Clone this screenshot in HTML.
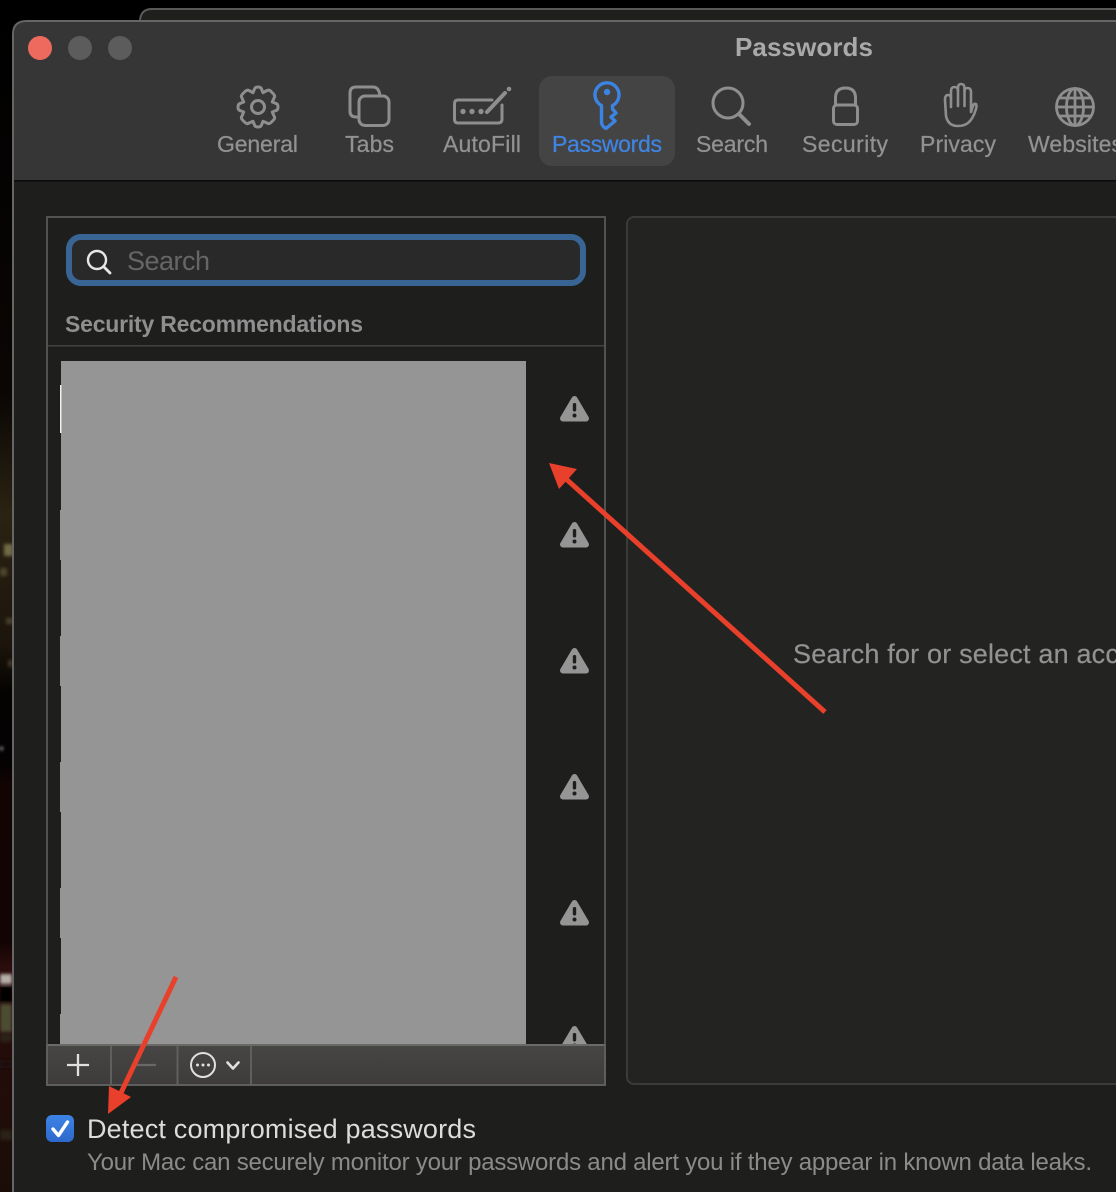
<!DOCTYPE html>
<html><head><meta charset="utf-8"><style>
html,body{margin:0;padding:0;background:#000;width:1116px;height:1192px;overflow:hidden}
svg{display:block;font-family:"Liberation Sans",sans-serif}
</style></head><body>
<svg width="1116" height="1192" viewBox="0 0 1116 1192" xmlns="http://www.w3.org/2000/svg">
<defs>
<linearGradient id="wp" x1="0" y1="0" x2="0" y2="1">
<stop offset="0" stop-color="#000"/><stop offset=".33" stop-color="#0a0604"/><stop offset=".43" stop-color="#2a2212"/><stop offset=".54" stop-color="#1c150c"/><stop offset=".58" stop-color="#050302"/><stop offset=".64" stop-color="#040202"/><stop offset=".66" stop-color="#130404"/><stop offset=".79" stop-color="#120404"/><stop offset=".81" stop-color="#2a0c0c"/><stop offset="1" stop-color="#1a0d08"/>
</linearGradient>
<linearGradient id="tb" x1="0" y1="0" x2="0" y2="1"><stop offset="0" stop-color="#474645"/><stop offset="1" stop-color="#3d3c3b"/></linearGradient>
<linearGradient id="cb" x1="0" y1="0" x2="0" y2="1"><stop offset="0" stop-color="#3d83e6"/><stop offset="1" stop-color="#2d69cc"/></linearGradient>
<filter id="bl" x="-50%" y="-50%" width="200%" height="200%"><feGaussianBlur stdDeviation="1.5"/></filter>
<g id="warn"><path d="M0-11 L11.500 8.500 L-11.500 8.500Z" fill="#959595" stroke="#959595" stroke-width="6" stroke-linejoin="round"/>
<rect x="-1.700" y="-7" width="3.400" height="8.500" rx="1.500" fill="#1e1e1d"/><circle cx="0" cy="5.500" r="2" fill="#1e1e1d"/></g>
</defs>

<!-- wallpaper strip -->
<rect x="0" y="0" width="13" height="1192" fill="url(#wp)"/>
<g filter="url(#bl)">
<rect x="4" y="544" width="9" height="12" fill="#8a8458" opacity=".75"/>
<rect x="0" y="568" width="7" height="8" fill="#6a6040" opacity=".6"/>
<rect x="6" y="618" width="7" height="6" fill="#5a5238" opacity=".7"/>
<rect x="8" y="660" width="5" height="7" fill="#5a5238" opacity=".6"/>
<rect x="0" y="747" width="3" height="3" fill="#aaa"/>
<rect x="0" y="974" width="12" height="10" fill="#b5aea8"/>
<rect x="0" y="986" width="12" height="16" fill="#000"/>
<rect x="0" y="1004" width="12" height="28" fill="#4e4c30"/>
<rect x="0" y="1034" width="12" height="8" fill="#2a2012"/>
<rect x="0" y="1060" width="12" height="8" fill="#1a1008"/>
<rect x="0" y="1130" width="12" height="10" fill="#2a2014"/>
</g>

<!-- back window -->
<path d="M140 22 V20 Q141 9 152 9 H1125 V22Z" fill="#1f1f1e" stroke="#5a5a5a" stroke-width="2"/>

<!-- main window -->
<path d="M13 1200 V34 Q13 21 27 21 H1125 V1200Z" fill="#1e1e1d" stroke="#666" stroke-width="2"/>
<path d="M14 180 V34 Q14 22 27 22 H1116 V180Z" fill="#363636"/>
<rect x="14" y="180" width="1102" height="1.500" fill="#0b0b0b"/>

<circle cx="40" cy="48" r="12" fill="#ee6a5f"/>
<circle cx="80" cy="48" r="12" fill="#5c5c5c"/>
<circle cx="120" cy="48" r="12" fill="#5c5c5c"/>

<text x="735" y="56" font-size="26" font-weight="700" fill="#a9a9a9" textLength="138" lengthAdjust="spacing">Passwords</text>

<rect x="539" y="76" width="136" height="90" rx="13" fill="#444"/>

<!-- toolbar icons -->
<g fill="none" stroke="#8e8e8e" stroke-width="3" stroke-linecap="round" stroke-linejoin="round">
<g transform="translate(258 107)"><path d="M-3.500-18 Q-3-20 0-20 Q3-20 3.500-18 L5-14.300 L9-16.500 Q11.500-17.500 13-15.500 L15.500-13 Q17.500-11 16-9 L14.300-5 L18-3.500 Q20-3 20 0 Q20 3 18 3.500 L14.300 5 L16 9 Q17.500 11 15.500 13 L13 15.500 Q11 17.500 9 16 L5 14.300 L3.500 18 Q3 20 0 20 Q-3 20-3.500 18 L-5 14.300 L-9 16 Q-11 17.500-13 15.500 L-15.500 13 Q-17.500 11-16 9 L-14.300 5 L-18 3.500 Q-20 3-20 0 Q-20-3-18-3.500 L-14.300-5 L-16-9 Q-17.500-11-15.500-13 L-13-15.500 Q-11-17.500-9-16.500 L-5-14.300Z"/><circle r="6.500"/></g>
<path d="M358 117 H356 Q350 117 350 111 V93 Q350 87 356 87 H373 Q379 87 380 96"/>
<rect x="359" y="96" width="30" height="29.500" rx="6"/>
<path d="M492 100 H458 Q454.500 100 454.500 104 V119 Q454.500 123 458 123 H498 Q502 123 502 119 V105"/>
<path d="M487 112 L505 93" stroke-width="4"/>
<circle cx="728" cy="103" r="15"/>
<path d="M739 114 L749 124" stroke-width="4"/>
<rect x="833.500" y="105" width="24" height="19.500" rx="3.500"/>
<path d="M835.500 105 V98 Q835.500 88 845.500 88 Q855.500 88 855.500 98 V105"/>
<g stroke-width="2.600"><path d="M945 100 Q945 95 948 95 Q951 95 951 99 V91 Q951 87 954.500 87 Q958 87 958 91 V88 Q958 84 961 84 Q964.500 84 964.500 88 V91 Q964.500 88 967.500 88 Q971 88 971 92 V112 L973 106 Q974 103 976 104 Q977 106 976 109 Q973 119 968 123 Q964 126 958 126 Q948 126 946 116 Z"/><path d="M951 99 V107 M958 91 V106 M964.500 91 V106"/></g>
<g stroke-width="2.800"><circle cx="1075" cy="107" r="18.500"/><ellipse cx="1075" cy="107" rx="8.500" ry="18.500"/><path d="M1075 88.500 V125.500 M1056.500 107 H1093.500 M1059 98 H1091 M1059 116 H1091"/></g>
</g>
<g fill="#8e8e8e"><circle cx="509" cy="89" r="2.300"/><circle cx="463" cy="111.500" r="2.700"/><circle cx="472" cy="111.500" r="2.700"/><circle cx="481" cy="111.500" r="2.700"/></g>
<path d="M601.500 105.500 A12 12 0 1 1 612.500 105.500 V109 L616 113 L611 117 L615 121 L606 128.500 Q601.500 126 601.500 122Z" fill="none" stroke="#3c84e4" stroke-width="3.400" stroke-linejoin="round"/>
<circle cx="607" cy="92" r="3.200" fill="#3c84e4"/>

<!-- toolbar labels -->
<g font-size="23" fill="#929292" stroke="#929292" stroke-width=".25">
<text x="217" y="152" textLength="81" lengthAdjust="spacing">General</text>
<text x="345" y="152" textLength="49" lengthAdjust="spacing">Tabs</text>
<text x="443" y="152" textLength="78" lengthAdjust="spacing">AutoFill</text>
<text x="552" y="152" textLength="110" lengthAdjust="spacing" fill="#3f84e2" stroke="#3f84e2">Passwords</text>
<text x="696" y="152" textLength="72" lengthAdjust="spacing">Search</text>
<text x="802" y="152" textLength="86" lengthAdjust="spacing">Security</text>
<text x="920" y="152" textLength="76" lengthAdjust="spacing">Privacy</text>
<text x="1028" y="152" textLength="95" lengthAdjust="spacing">Websites</text>
</g>

<!-- right panel -->
<rect x="627" y="217" width="500" height="867" rx="7" fill="#232322" stroke="#3b3b3a" stroke-width="2"/>
<text x="793" y="663" font-size="27" fill="#929292" stroke="#929292" stroke-width=".2" letter-spacing=".18">Search for or select an account</text>

<!-- left panel -->
<rect x="47" y="217" width="558" height="867" fill="#1e1e1d" stroke="#525252" stroke-width="2"/>
<rect x="69" y="237" width="514" height="46" rx="12" fill="#2a2929" stroke="#386594" stroke-width="6"/>
<circle cx="97" cy="260" r="9" fill="none" stroke="#e6e6e6" stroke-width="2.400"/>
<path d="M103.500 266.500 L110 273" stroke="#e6e6e6" stroke-width="2.800" stroke-linecap="round"/>
<text x="127" y="270" font-size="27" fill="#666" textLength="83" lengthAdjust="spacing">Search</text>
<text x="65" y="332" font-size="23" font-weight="700" fill="#8f8f8f" textLength="298" lengthAdjust="spacing">Security Recommendations</text>
<rect x="48" y="345" width="556" height="1.500" fill="#414141"/>

<rect x="61" y="361" width="465" height="684" fill="#959595"/>
<rect x="60" y="385" width="1.500" height="48" fill="#f0f0f0"/>
<rect x="60" y="510" width="1" height="50" fill="#959595"/>
<rect x="60" y="636" width="1" height="50" fill="#959595"/>
<rect x="60" y="762" width="1" height="50" fill="#959595"/>
<rect x="60" y="888" width="1" height="50" fill="#959595"/>
<rect x="60" y="1014" width="1" height="31" fill="#959595"/>

<use href="#warn" x="574.500" y="410"/>
<use href="#warn" x="574.500" y="536"/>
<use href="#warn" x="574.500" y="662"/>
<use href="#warn" x="574.500" y="788"/>
<use href="#warn" x="574.500" y="914"/>
<use href="#warn" x="574.500" y="1040"/>

<!-- list toolbar -->
<rect x="47" y="1045" width="558" height="39" fill="url(#tb)"/>
<rect x="46" y="1044" width="560" height="2" fill="#6a6a69"/>
<rect x="46" y="1084" width="560" height="2" fill="#5e5e5d"/>
<rect x="46" y="1044" width="2" height="42" fill="#5e5e5d"/>
<rect x="604" y="1044" width="2" height="42" fill="#5e5e5d"/>
<rect x="110" y="1046" width="2" height="38" fill="#5f5f5e"/>
<rect x="176.500" y="1046" width="2" height="38" fill="#5f5f5e"/>
<rect x="250" y="1046" width="2" height="38" fill="#5f5f5e"/>
<path d="M78 1054 V1076 M67 1065 H89" stroke="#e0e0e0" stroke-width="2.300" fill="none"/>
<path d="M133 1065 H156" stroke="#686868" stroke-width="2.300" fill="none"/>
<circle cx="203" cy="1065" r="12" fill="none" stroke="#e0e0e0" stroke-width="2"/>
<circle cx="197.500" cy="1065" r="1.500" fill="#e0e0e0"/><circle cx="203" cy="1065" r="1.500" fill="#e0e0e0"/><circle cx="208.500" cy="1065" r="1.500" fill="#e0e0e0"/>
<path d="M227.500 1062.500 L233 1068.500 L238.500 1062.500" fill="none" stroke="#e0e0e0" stroke-width="2.600" stroke-linecap="round" stroke-linejoin="round"/>

<!-- checkbox -->
<rect x="46" y="1115" width="28" height="27" rx="6" fill="url(#cb)"/>
<path d="M53 1129 L58.500 1135.500 L67.500 1122" fill="none" stroke="#fff" stroke-width="3.400" stroke-linecap="round" stroke-linejoin="round"/>
<text x="87" y="1138" font-size="27" fill="#dcdcdc" textLength="389" lengthAdjust="spacing">Detect compromised passwords</text>
<text x="87" y="1170" font-size="24" fill="#8b8b8b" textLength="1005" lengthAdjust="spacing">Your Mac can securely monitor your passwords and alert you if they appear in known data leaks.</text>

<!-- annotation arrows -->
<path d="M825 712 L565 478" stroke="#e8402a" stroke-width="5" fill="none"/>
<path d="M549 463 L577 469 L559 489Z" fill="#e8402a"/>
<path d="M176 977 L119 1097" stroke="#e8402a" stroke-width="5" fill="none"/>
<path d="M108 1114 L131 1097 L109 1086Z" fill="#e8402a"/>
</svg>
</body></html>
